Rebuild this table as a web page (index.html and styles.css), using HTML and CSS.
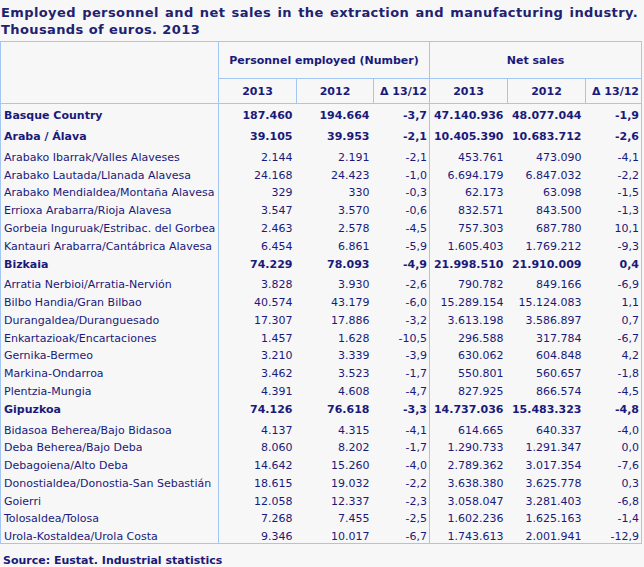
FILE: index.html
```html
<!DOCTYPE html>
<html>
<head>
<meta charset="utf-8">
<link rel="stylesheet" href="styles.css">
</head>
<body>
<div class="page">
  <h1 class="title">Employed personnel and net sales in the extraction and manufacturing industry. Thousands of euros. 2013</h1>
  <table class="data">
    <colgroup>
      <col class="c-name"><col class="c-num"><col class="c-num2"><col class="c-delta"><col class="c-num"><col class="c-num"><col class="c-delta">
    </colgroup>
    <thead>
      <tr class="h1">
        <th rowspan="2" class="blank"></th>
        <th colspan="3">Personnel employed (Number)</th>
        <th colspan="3">Net sales</th>
      </tr>
      <tr class="h2">
        <th>2013</th><th>2012</th><th class="hd">Δ 13/12</th>
        <th>2013</th><th>2012</th><th class="hd">Δ 13/12</th>
      </tr>
    </thead>
    <tbody>
      <tr class="b"><td>Basque Country</td><td>187.460</td><td>194.664</td><td class="d">-3,7</td><td class="g">47.140.936</td><td>48.077.044</td><td class="d">-1,9</td></tr>
      <tr class="b"><td>Araba / Álava</td><td>39.105</td><td>39.953</td><td class="d">-2,1</td><td class="g">10.405.390</td><td>10.683.712</td><td class="d">-2,6</td></tr>
      <tr><td>Arabako Ibarrak/Valles Alaveses</td><td>2.144</td><td>2.191</td><td class="d">-2,1</td><td class="g">453.761</td><td>473.090</td><td class="d">-4,1</td></tr>
      <tr><td>Arabako Lautada/Llanada Alavesa</td><td>24.168</td><td>24.423</td><td class="d">-1,0</td><td class="g">6.694.179</td><td>6.847.032</td><td class="d">-2,2</td></tr>
      <tr><td>Arabako Mendialdea/Montaña Alavesa</td><td>329</td><td>330</td><td class="d">-0,3</td><td class="g">62.173</td><td>63.098</td><td class="d">-1,5</td></tr>
      <tr><td>Errioxa Arabarra/Rioja Alavesa</td><td>3.547</td><td>3.570</td><td class="d">-0,6</td><td class="g">832.571</td><td>843.500</td><td class="d">-1,3</td></tr>
      <tr><td>Gorbeia Inguruak/Estribac. del Gorbea</td><td>2.463</td><td>2.578</td><td class="d">-4,5</td><td class="g">757.303</td><td>687.780</td><td class="d">10,1</td></tr>
      <tr><td>Kantauri Arabarra/Cantábrica Alavesa</td><td>6.454</td><td>6.861</td><td class="d">-5,9</td><td class="g">1.605.403</td><td>1.769.212</td><td class="d">-9,3</td></tr>
      <tr class="b"><td>Bizkaia</td><td>74.229</td><td>78.093</td><td class="d">-4,9</td><td class="g">21.998.510</td><td>21.910.009</td><td class="d">0,4</td></tr>
      <tr><td>Arratia Nerbioi/Arratia-Nervión</td><td>3.828</td><td>3.930</td><td class="d">-2,6</td><td class="g">790.782</td><td>849.166</td><td class="d">-6,9</td></tr>
      <tr><td>Bilbo Handia/Gran Bilbao</td><td>40.574</td><td>43.179</td><td class="d">-6,0</td><td class="g">15.289.154</td><td>15.124.083</td><td class="d">1,1</td></tr>
      <tr><td>Durangaldea/Duranguesado</td><td>17.307</td><td>17.886</td><td class="d">-3,2</td><td class="g">3.613.198</td><td>3.586.897</td><td class="d">0,7</td></tr>
      <tr><td>Enkartazioak/Encartaciones</td><td>1.457</td><td>1.628</td><td class="d">-10,5</td><td class="g">296.588</td><td>317.784</td><td class="d">-6,7</td></tr>
      <tr><td>Gernika-Bermeo</td><td>3.210</td><td>3.339</td><td class="d">-3,9</td><td class="g">630.062</td><td>604.848</td><td class="d">4,2</td></tr>
      <tr><td>Markina-Ondarroa</td><td>3.462</td><td>3.523</td><td class="d">-1,7</td><td class="g">550.801</td><td>560.657</td><td class="d">-1,8</td></tr>
      <tr><td>Plentzia-Mungia</td><td>4.391</td><td>4.608</td><td class="d">-4,7</td><td class="g">827.925</td><td>866.574</td><td class="d">-4,5</td></tr>
      <tr class="b"><td>Gipuzkoa</td><td>74.126</td><td>76.618</td><td class="d">-3,3</td><td class="g">14.737.036</td><td>15.483.323</td><td class="d">-4,8</td></tr>
      <tr><td>Bidasoa Beherea/Bajo Bidasoa</td><td>4.137</td><td>4.315</td><td class="d">-4,1</td><td class="g">614.665</td><td>640.337</td><td class="d">-4,0</td></tr>
      <tr><td>Deba Beherea/Bajo Deba</td><td>8.060</td><td>8.202</td><td class="d">-1,7</td><td class="g">1.290.733</td><td>1.291.347</td><td class="d">0,0</td></tr>
      <tr><td>Debagoiena/Alto Deba</td><td>14.642</td><td>15.260</td><td class="d">-4,0</td><td class="g">2.789.362</td><td>3.017.354</td><td class="d">-7,6</td></tr>
      <tr><td>Donostialdea/Donostia-San Sebastián</td><td>18.615</td><td>19.032</td><td class="d">-2,2</td><td class="g">3.638.380</td><td>3.625.778</td><td class="d">0,3</td></tr>
      <tr><td>Goierri</td><td>12.058</td><td>12.337</td><td class="d">-2,3</td><td class="g">3.058.047</td><td>3.281.403</td><td class="d">-6,8</td></tr>
      <tr><td>Tolosaldea/Tolosa</td><td>7.268</td><td>7.455</td><td class="d">-2,5</td><td class="g">1.602.236</td><td>1.625.163</td><td class="d">-1,4</td></tr>
      <tr><td>Urola-Kostaldea/Urola Costa</td><td>9.346</td><td>10.017</td><td class="d">-6,7</td><td class="g">1.743.613</td><td>2.001.941</td><td class="d">-12,9</td></tr>
    </tbody>
  </table>
  <p class="source">Source: Eustat. Industrial statistics</p>
</div>
</body>
</html>
```
FILE: styles.css
```css
html, body {
  margin: 0;
  padding: 0;
  background: #f7f7f7;
}
body {
  font-family: "DejaVu Sans", Verdana, sans-serif;
  color: #1a1a7a;
}
.page {
  width: 642px;
  padding-top: 4px;
}
.title {
  margin: 0 4px 3px 1px;
  font-size: 13px;
  line-height: 17px;
  font-weight: bold;
  letter-spacing: 0.4px;
  text-align: justify;
  color: #1e2270;
}
.data {
  width: 642px;
  border-collapse: collapse;
  table-layout: fixed;
  font-size: 11px;
  border: 1px solid #a3c6f2;
}
.c-name { width: 218px; }
.c-num { width: 78px; }
.c-num2 { width: 77px; }
.c-delta { width: 56px; }
th {
  border: 1px solid #a3c6f2;
  font-weight: bold;
  text-align: center;
  padding: 0;
}
.h1 th { height: 36px; }
.h2 th { height: 24px; }
.h2 .hd { text-align: right; padding-right: 2px; }
td {
  padding: 4.75px 4px 0 0;
  line-height: 13px;
  text-align: right;
  white-space: nowrap;
}
tr.b td {
  font-weight: bold;
  padding-top: 5px;
  padding-bottom: 3px;
}
td:first-child {
  text-align: left;
  padding-left: 3px;
  border-right: 1px solid #a3c6f2;
}
td.d { padding-right: 2px; }
td.g { border-left: 1px solid #a3c6f2; }
.source {
  margin: 10px 0 0 3px;
  font-size: 11px;
  line-height: 13px;
  font-weight: bold;
}
```
